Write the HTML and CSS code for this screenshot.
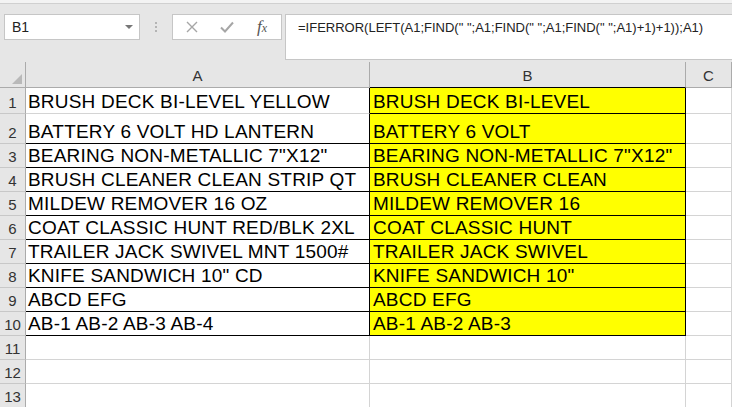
FILE: index.html
```html
<!DOCTYPE html>
<html>
<head>
    <meta charset="utf-8">
    <title>Sheet</title>
<link rel="stylesheet" href="styles.css">
</head>
<body>
    <div class="topstrip"></div>
    <div class="bar">
        <div class="namebox">
            <span>B1</span>
            <span class="caret"></span>
        </div>
        <div class="grip"><i></i><i></i><i></i></div>
        <div class="fxbox">
            <svg class="ico" width="14" height="14" viewBox="0 0 14 14"><path d="M2 2 L12 12 M12 2 L2 12" stroke="#a6a6a6" stroke-width="1.4" fill="none"/></svg>
            <svg class="ico" width="16" height="14" viewBox="0 0 16 14"><path d="M2 7.5 L6 11.5 L14 2.5" stroke="#a6a6a6" stroke-width="2" fill="none"/></svg>
            <span class="fx">f<sub>x</sub></span>
        </div>
        <div class="formula">=IFERROR(LEFT(A1;FIND(" ";A1;FIND(" ";A1;FIND(" ";A1)+1)+1));A1)</div>
    </div>

    <div class="sheet">
        <div class="corner"><span class="tri"></span></div>
        <div class="colhead">A</div>
        <div class="colhead colb">B</div>
        <div class="colhead">C</div>

        <div class="rowhead">1</div>
        <div class="cell a first">BRUSH DECK BI-LEVEL YELLOW</div>
        <div class="cell b">BRUSH DECK BI-LEVEL</div>
        <div class="cell"></div>

        <div class="rowhead">2</div>
        <div class="cell a">BATTERY 6 VOLT HD LANTERN</div>
        <div class="cell b">BATTERY 6 VOLT</div>
        <div class="cell"></div>

        <div class="rowhead">3</div>
        <div class="cell a">BEARING NON-METALLIC 7"X12"</div>
        <div class="cell b">BEARING NON-METALLIC 7"X12"</div>
        <div class="cell"></div>

        <div class="rowhead">4</div>
        <div class="cell a">BRUSH CLEANER CLEAN STRIP QT</div>
        <div class="cell b">BRUSH CLEANER CLEAN</div>
        <div class="cell"></div>

        <div class="rowhead">5</div>
        <div class="cell a">MILDEW REMOVER 16 OZ</div>
        <div class="cell b">MILDEW REMOVER 16</div>
        <div class="cell"></div>

        <div class="rowhead">6</div>
        <div class="cell a">COAT CLASSIC HUNT RED/BLK 2XL</div>
        <div class="cell b">COAT CLASSIC HUNT</div>
        <div class="cell"></div>

        <div class="rowhead">7</div>
        <div class="cell a">TRAILER JACK SWIVEL MNT 1500#</div>
        <div class="cell b">TRAILER JACK SWIVEL</div>
        <div class="cell"></div>

        <div class="rowhead">8</div>
        <div class="cell a">KNIFE SANDWICH 10" CD</div>
        <div class="cell b">KNIFE SANDWICH 10"</div>
        <div class="cell"></div>

        <div class="rowhead">9</div>
        <div class="cell a">ABCD EFG</div>
        <div class="cell b">ABCD EFG</div>
        <div class="cell"></div>

        <div class="rowhead">10</div>
        <div class="cell a">AB-1 AB-2 AB-3 AB-4</div>
        <div class="cell b">AB-1 AB-2 AB-3</div>
        <div class="cell"></div>

        <div class="rowhead">11</div>
        <div class="cell"></div>
        <div class="cell"></div>
        <div class="cell"></div>

        <div class="rowhead">12</div>
        <div class="cell"></div>
        <div class="cell"></div>
        <div class="cell"></div>

        <div class="rowhead">13</div>
        <div class="cell"></div>
        <div class="cell"></div>
        <div class="cell"></div>
    </div>
</body>
</html>
```

FILE: styles.css
```css
body,html{
    margin: 0;
    padding: 0;
    height: 100%;
    overflow: hidden;
}
body{
    background-color: #e6e6e6;
    font-family: "Liberation Sans", Arial, sans-serif;
}
.topstrip{
    height: 3px;
    background-color: #f3f3f3;
    border-bottom: 1px solid #d0d0d0;
}
.bar{
    height: 57px;
    padding-top: 10px;
    box-sizing: border-box;
    display: flex;
    align-items: flex-start;
}
.namebox{
    margin-left: 4px;
    width: 136px;
    height: 26px;
    box-sizing: border-box;
    background-color: #fff;
    border: 1px solid #c6c6c6;
    display: flex;
    align-items: center;
    justify-content: space-between;
    padding: 0 6px 0 7px;
    font-size: 14px;
    color: #222;
}
.caret{
    width: 0;
    height: 0;
    border-left: 4px solid transparent;
    border-right: 4px solid transparent;
    border-top: 4px solid #777;
}
.grip{
    width: 32px;
    height: 26px;
    display: flex;
    flex-direction: column;
    align-items: center;
    justify-content: center;
    gap: 2px;
}
.grip i{
    width: 2px;
    height: 2px;
    background-color: #b4b4b4;
}
.fxbox{
    width: 110px;
    height: 26px;
    box-sizing: border-box;
    background-color: #fff;
    border: 1px solid #c6c6c6;
    display: flex;
    align-items: center;
    padding-left: 12px;
    gap: 20px;
}
.fx{
    font-family: "Liberation Serif", serif;
    font-style: italic;
    font-size: 17px;
    color: #555;
    margin-left: 2px;
}
.fx sub{
    font-size: 12px;
    vertical-align: 0;
}
.formula{
    margin-left: 3px;
    flex: 1;
    height: 46px;
    box-sizing: border-box;
    background-color: #fff;
    border: 1px solid #c6c6c6;
    border-right: none;
    padding: 5px 0 0 12px;
    font-size: 13px;
    color: #222;
    white-space: nowrap;
}
.sheet{
    margin-top: 1px;
    display: grid;
    grid-template-columns: 26px 344px 316px 1fr;
    grid-template-rows: 26px 26px 30px repeat(11, 24px);
    background-color: #fff;
}
.sheet > div{
    box-sizing: border-box;
    border-right: 1px solid #d4d4d4;
    border-bottom: 1px solid #d4d4d4;
}
.corner{
    background-color: #e6e6e6;
    position: relative;
    border-right-color: #ababab !important;
    border-bottom-color: #ababab !important;
}
.tri{
    position: absolute;
    right: 3px;
    bottom: 3px;
    width: 0;
    height: 0;
    border-left: 10px solid transparent;
    border-bottom: 10px solid #b9b9b9;
}
.colhead{
    background-color: #e6e6e6;
    border-right-color: #ababab !important;
    border-bottom-color: #ababab !important;
    display: flex;
    align-items: center;
    justify-content: center;
    font-size: 15px;
    color: #333;
    padding-top: 2px;
}
.sheet > .colb{
    border-bottom-color: #000 !important;
}
.rowhead{
    background-color: #e6e6e6;
    border-right-color: #ababab !important;
    border-bottom-color: #c8c8c8 !important;
    display: flex;
    align-items: flex-end;
    justify-content: center;
    font-size: 15px;
    color: #333;
    padding-bottom: 2px;
}
.cell{
    display: flex;
    align-items: flex-end;
    font-size: 19px;
    line-height: 19px;
    letter-spacing: 0.2px;
    color: #000;
    padding: 0 0 2px 2px;
    white-space: nowrap;
}
.sheet > .a{
    border-right-color: #000;
    border-bottom-color: #000;
}
.sheet > .a.first{
    border-bottom-color: #d4d4d4;
}
.sheet > .b{
    background-color: #ffff00;
    border-right-color: #000;
    border-bottom-color: #000;
    padding-left: 3px;
}
```
